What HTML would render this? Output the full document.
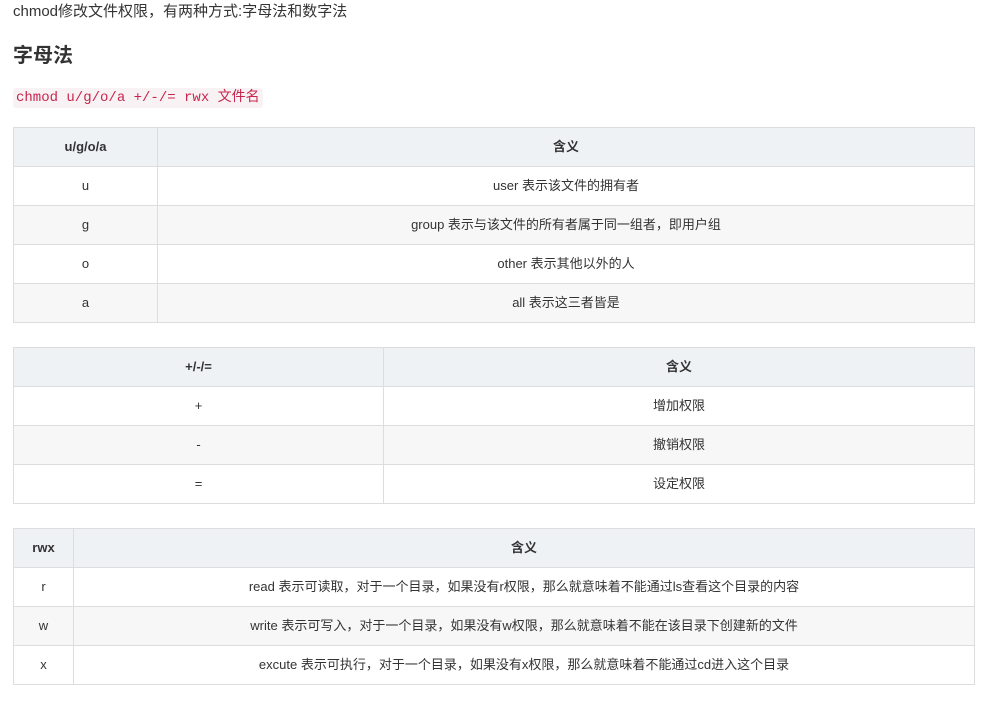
<!DOCTYPE html>
<html><head><meta charset="utf-8"><style>
body{margin:0;background:#fff;color:#333;font-family:"Liberation Sans","Noto Sans CJK SC",sans-serif;width:996px;height:701px;overflow:hidden;position:relative}
.p{position:absolute;left:13px;top:2px;font-size:15px;line-height:20px;color:#333}
h2{position:absolute;left:13px;top:43px;margin:0;font-size:20px;line-height:26px;font-weight:bold;color:#333}
code{position:absolute;left:13px;top:88px;height:20px;line-height:20px;padding:0 3px;background:#f9f2f4;color:#c7254e;font-family:"Liberation Mono","Noto Sans CJK SC",monospace;font-size:14px;border-radius:3px}
table{position:absolute;left:13px;width:962px;border-collapse:collapse;font-size:13px;color:#333}
td,th{border:1px solid #ddd;height:38px;padding:0;text-align:center;line-height:16px;vertical-align:middle}
td span,th span{display:inline-block;height:16px;line-height:16px;overflow:visible}
th{background:#eff2f5;font-weight:bold}
tr:nth-child(odd) td{background:#f7f7f7}
tr.w td{background:#fff}
</style></head><body>
<div class="p">chmod修改文件权限，有两种方式:字母法和数字法</div>
<h2>字母法</h2>
<code>chmod u/g/o/a +/-/= rwx 文件名</code>
<table style="top:127px"><tr><th style="width:143px"><span>u/g/o/a</span></th><th><span>含义</span></th></tr>
<tr class="w"><td><span>u</span></td><td><span>user 表示该文件的拥有者</span></td></tr>
<tr><td><span>g</span></td><td><span>group 表示与该文件的所有者属于同一组者，即用户组</span></td></tr>
<tr class="w"><td><span>o</span></td><td><span>other 表示其他以外的人</span></td></tr>
<tr><td><span>a</span></td><td><span>all 表示这三者皆是</span></td></tr></table>
<table style="top:347px"><tr><th style="width:369px"><span>+/-/=</span></th><th><span>含义</span></th></tr>
<tr class="w"><td><span>+</span></td><td><span>增加权限</span></td></tr>
<tr><td><span>-</span></td><td><span>撤销权限</span></td></tr>
<tr class="w"><td><span>=</span></td><td><span>设定权限</span></td></tr></table>
<table style="top:528px"><tr><th style="width:59px"><span>rwx</span></th><th><span>含义</span></th></tr>
<tr class="w"><td><span>r</span></td><td><span>read 表示可读取，对于一个目录，如果没有r权限，那么就意味着不能通过ls查看这个目录的内容</span></td></tr>
<tr><td><span>w</span></td><td><span>write 表示可写入，对于一个目录，如果没有w权限，那么就意味着不能在该目录下创建新的文件</span></td></tr>
<tr class="w"><td><span>x</span></td><td><span>excute 表示可执行，对于一个目录，如果没有x权限，那么就意味着不能通过cd进入这个目录</span></td></tr></table>
</body></html>
